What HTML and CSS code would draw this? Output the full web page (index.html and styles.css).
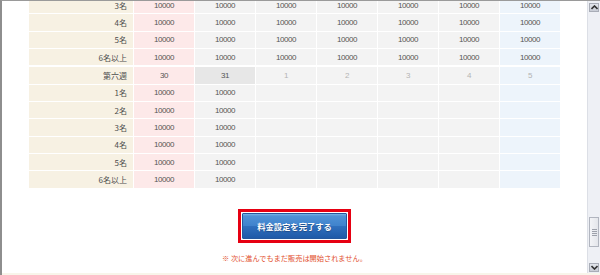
FILE: index.html
```html
<!DOCTYPE html>
<html lang="ja">
<head>
<meta charset="utf-8">
<link rel="stylesheet" href="styles.css">
</head>
<body>
<div class="window">
  <div class="main">
    <div class="viewport">
      <div class="week week-first">
        <div class="c lbl">3名</div><div class="c pk">10000</div><div class="c gy">10000</div><div class="c gy">10000</div><div class="c gy">10000</div><div class="c gy">10000</div><div class="c gy">10000</div><div class="c bl">10000</div>
        <div class="c lbl">4名</div><div class="c pk">10000</div><div class="c gy">10000</div><div class="c gy">10000</div><div class="c gy">10000</div><div class="c gy">10000</div><div class="c gy">10000</div><div class="c bl">10000</div>
        <div class="c lbl">5名</div><div class="c pk">10000</div><div class="c gy">10000</div><div class="c gy">10000</div><div class="c gy">10000</div><div class="c gy">10000</div><div class="c gy">10000</div><div class="c bl">10000</div>
        <div class="c lbl">6名以上</div><div class="c pk">10000</div><div class="c gy">10000</div><div class="c gy">10000</div><div class="c gy">10000</div><div class="c gy">10000</div><div class="c gy">10000</div><div class="c bl">10000</div>
      </div>
      <div class="week week-next">
        <div class="c lbl">第六週</div><div class="c pk">30</div><div class="c dk">31</div><div class="c gy mute">1</div><div class="c gy mute">2</div><div class="c gy mute">3</div><div class="c gy mute">4</div><div class="c bl mute">5</div>
        <div class="c lbl">1名</div><div class="c pk">10000</div><div class="c gy">10000</div><div class="c gy"></div><div class="c gy"></div><div class="c gy"></div><div class="c gy"></div><div class="c bl"></div>
        <div class="c lbl">2名</div><div class="c pk">10000</div><div class="c gy">10000</div><div class="c gy"></div><div class="c gy"></div><div class="c gy"></div><div class="c gy"></div><div class="c bl"></div>
        <div class="c lbl">3名</div><div class="c pk">10000</div><div class="c gy">10000</div><div class="c gy"></div><div class="c gy"></div><div class="c gy"></div><div class="c gy"></div><div class="c bl"></div>
        <div class="c lbl">4名</div><div class="c pk">10000</div><div class="c gy">10000</div><div class="c gy"></div><div class="c gy"></div><div class="c gy"></div><div class="c gy"></div><div class="c bl"></div>
        <div class="c lbl">5名</div><div class="c pk">10000</div><div class="c gy">10000</div><div class="c gy"></div><div class="c gy"></div><div class="c gy"></div><div class="c gy"></div><div class="c bl"></div>
        <div class="c lbl">6名以上</div><div class="c pk">10000</div><div class="c gy">10000</div><div class="c gy"></div><div class="c gy"></div><div class="c gy"></div><div class="c gy"></div><div class="c bl"></div>
      </div>
      <div class="btn-frame">
        <button class="btn" type="button">料金設定を完了する</button>
      </div>
      <p class="note">※ 次に進んでもまだ販売は開始されません。</p>
    </div>
    <div class="scrollbar">
      <div class="sb-btn">
        <svg width="7" height="5" viewBox="0 0 7 5"><path d="M0.5 4 L3.5 1 L6.5 4" fill="none" stroke="#333" stroke-width="1.6"/></svg>
      </div>
      <div class="sb-track"></div>
      <div class="sb-thumb"><span class="grip"></span></div>
      <div class="sb-gap"></div>
      <div class="sb-btn">
        <svg width="7" height="5" viewBox="0 0 7 5"><path d="M0.5 1 L3.5 4 L6.5 1" fill="none" stroke="#333" stroke-width="1.6"/></svg>
      </div>
    </div>
  </div>
  <div class="strip"></div>
</div>
</body>
</html>
```

FILE: styles.css
```css
* { box-sizing: border-box; }
html, body { margin: 0; padding: 0; background: #fff; }
body { width: 600px; height: 275px; overflow: hidden; }

.window {
  width: 600px;
  height: 275px;
  border-top: 1px solid #9a9a9a;
  border-left: 2px solid #8e8e8e;
  display: flex;
  flex-direction: column;
}
.main {
  flex: 1;
  min-height: 0;
  display: flex;
}
.viewport {
  flex: 1;
  min-width: 0;
  overflow: hidden;
  background: #fff;
  display: flex;
  flex-direction: column;
  align-items: center;
}
.strip { height: 2px; background: #f8f5ea; }

.week {
  display: grid;
  grid-template-columns: 104px repeat(7, 60px);
  grid-auto-rows: 16.3px;
  gap: 1px;
  background: #fff;
  flex: none;
}
.week-first { margin-top: -4px; }
.week-next { margin-top: 2.3px; }

.c {
  display: flex;
  align-items: center;
  justify-content: center;
  font-family: "Liberation Sans", Arial, sans-serif;
  font-size: 8px;
  letter-spacing: -0.4px;
  color: #555;
}
.lbl {
  background: #f7f1e3;
  justify-content: flex-end;
  padding-right: 6px;
  font-family: "Noto Sans CJK JP", sans-serif;
  letter-spacing: 0;
  color: #4d4d4d;
}
.pk { background: #fde9e9; }
.gy { background: #f3f3f3; }
.bl { background: #edf4fb; }
.dk { background: #e7e7e7; }
.mute { color: #b3b3b3; }

.btn-frame {
  margin-top: 21.7px;
  border: 3px solid #e60012;
  padding: 1px;
  background: #fff;
  flex: none;
}
.btn {
  display: block;
  width: 105px;
  height: 26px;
  margin: 0;
  padding: 0;
  border: 1px solid #24589e;
  border-radius: 1px;
  background: linear-gradient(#7cb5e6 0%, #4f92d6 8%, #3f82cc 50%, #2f6fbd 52%, #1f5aa8 100%);
  color: #fff;
  font-family: "Noto Sans CJK JP", sans-serif;
  font-weight: bold;
  font-size: 8.3px;
  text-shadow: 0 1px 1px #1d4a86;
  cursor: pointer;
}

.note {
  margin: 9.4px 0 0;
  line-height: 10px;
  font-family: "Noto Sans CJK JP", sans-serif;
  font-size: 7.2px;
  color: #e2502e;
}

.scrollbar {
  width: 13px;
  flex: none;
  background: #eef0f5;
  border-left: 1px solid #dcdfe6;
  display: flex;
  flex-direction: column;
  padding: 2px 1px 1px 1px;
}
.sb-btn {
  height: 9px;
  flex: none;
  background: linear-gradient(#e2e5eb, #c9cdd6);
  border: 1px solid #a9adb7;
  display: flex;
  align-items: center;
  justify-content: center;
}
.sb-track { flex: 1; }
.sb-thumb {
  height: 30px;
  flex: none;
  background: linear-gradient(90deg, #f3f4f7, #e4e6eb);
  border: 1px solid #b1b5bf;
  display: flex;
  align-items: center;
  justify-content: center;
}
.grip {
  width: 5px;
  height: 7px;
  background: repeating-linear-gradient(#9da1ab 0 1px, transparent 1px 2px);
}
.sb-gap { height: 16px; flex: none; }
```
